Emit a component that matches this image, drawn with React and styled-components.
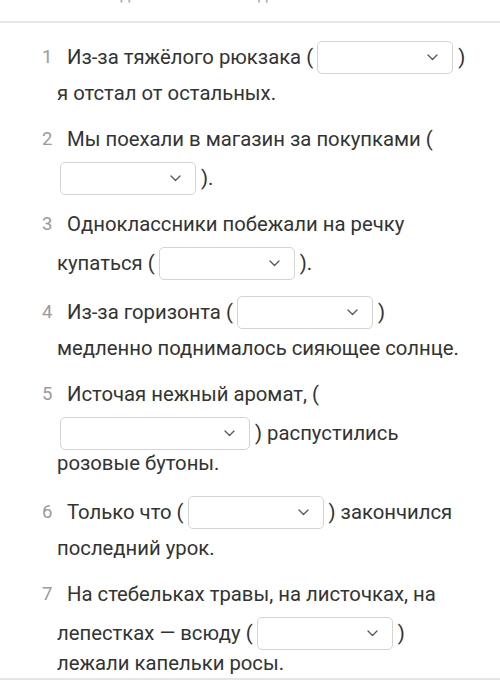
import React from "react";
import styled, { createGlobalStyle } from "styled-components";

const GlobalStyle = createGlobalStyle`
  html, body { margin: 0; padding: 0; background: #ffffff; }
  body { font-family: Roboto, "Noto Sans", Arial, sans-serif; }
`;

const Page = styled.div`
  width: 500px;
  height: 700px;
  overflow: hidden;
  background: #fff;
  display: flex;
  flex-direction: column;
`;

const Header = styled.div`
  height: 21px;
  flex: none;
  overflow: hidden;
  display: flex;
  align-items: flex-start;
  gap: 68px;
  padding-left: 101px;
  border-bottom: 2px solid #e6e6e6;
`;

const HeaderWord = styled.span`
  font-size: 17px;
  line-height: 17px;
  color: #a8a8a8;
  white-space: nowrap;
  margin-top: -14px;
`;

const List = styled.ol`
  list-style: none;
  margin: 0;
  padding: 0 0 0 42px;
  border-bottom: 2px solid #e6e6e6;
`;

const Item = styled.li`
  padding-top: 16px;
  color: #333;
  font-size: 20.3px;
`;

/* plain line: 30px; first line holding a select: 39px with the select
   a little above centre; later lines holding a select: 30px after a 9px gap */
const Line = styled.div`
  display: flex;
  align-items: center;
  white-space: pre;
  height: ${(p) => (p.$box && p.$first ? "39px" : "30px")};
  padding-bottom: ${(p) => (p.$box && p.$first ? "3px" : "0")};
  box-sizing: border-box;
  margin-top: ${(p) => (p.$box && !p.$first ? "9px" : "0")};
  padding-left: ${(p) => (p.$first ? "0" : "15px")};
`;

const Num = styled.span`
  width: 25px;
  flex: none;
  color: #9a9a9a;
  font-size: 18.5px;
`;

const SelectBox = styled.span`
  box-sizing: border-box;
  width: ${(p) => p.$w}px;
  height: 33px;
  margin: 0 ${(p) => p.$mr ?? 5}px 0 ${(p) => p.$ml ?? 4}px;
  border: 1.5px solid #d4d4d4;
  border-radius: 5px;
  background: #fff;
  display: flex;
  align-items: center;
  justify-content: flex-end;
  padding-right: 14px;
  flex: none;
`;

const Chevron = () => (
  <svg width="11" height="7" viewBox="0 0 11 7" fill="none">
    <path d="M1 1l4.5 4.5L10 1" stroke="#555" strokeWidth="1.3" strokeLinecap="round" strokeLinejoin="round" />
  </svg>
);

const Select = ({ w = 136, ml, mr }) => (
  <SelectBox $w={w} $ml={ml} $mr={mr}>
    <Chevron />
  </SelectBox>
);

const items = [
  [
    { box: true, parts: ["Из-за тяжёлого рюкзака (", { w: 136 }, ")"] },
    { parts: ["я отстал от остальных."] },
  ],
  [
    { parts: ["Мы поехали в магазин за покупками ("] },
    { box: true, parts: [{ w: 136, ml: 3 }, ")."] },
  ],
  [
    { parts: ["Одноклассники побежали на речку"] },
    { box: true, parts: ["купаться (", { w: 136 }, ")."] },
  ],
  [
    { box: true, parts: ["Из-за горизонта (", { w: 136 }, ")"] },
    { parts: ["медленно поднималось сияющее солнце."] },
  ],
  [
    { parts: ["Источая нежный аромат, ("] },
    { box: true, parts: [{ w: 190, ml: 3 }, ") распустились"] },
    { parts: ["розовые бутоны."] },
  ],
  [
    { box: true, parts: ["Только что (", { w: 136 }, ") закончился"] },
    { parts: ["последний урок."] },
  ],
  [
    { parts: ["На стебельках травы, на листочках, на"] },
    { box: true, parts: ["лепестках — всюду (", { w: 136 }, ")"] },
    { parts: ["лежали капельки росы."] },
  ],
];

export default function App() {
  return (
    <Page>
      <GlobalStyle />
      <Header>
        <HeaderWord>Задание</HeaderWord>
        <HeaderWord>Подсказка</HeaderWord>
      </Header>
      <List>
        {items.map((lines, i) => (
          <Item key={i}>
            {lines.map((ln, j) => (
              <Line key={j} $box={ln.box} $first={j === 0}>
                {j === 0 && <Num>{i + 1}</Num>}
                {ln.parts.map((p, k) =>
                  typeof p === "string" ? (
                    <span key={k}>{p}</span>
                  ) : (
                    <Select key={k} w={p.w} ml={p.ml} mr={p.mr} />
                  )
                )}
              </Line>
            ))}
          </Item>
        ))}
      </List>
    </Page>
  );
}
